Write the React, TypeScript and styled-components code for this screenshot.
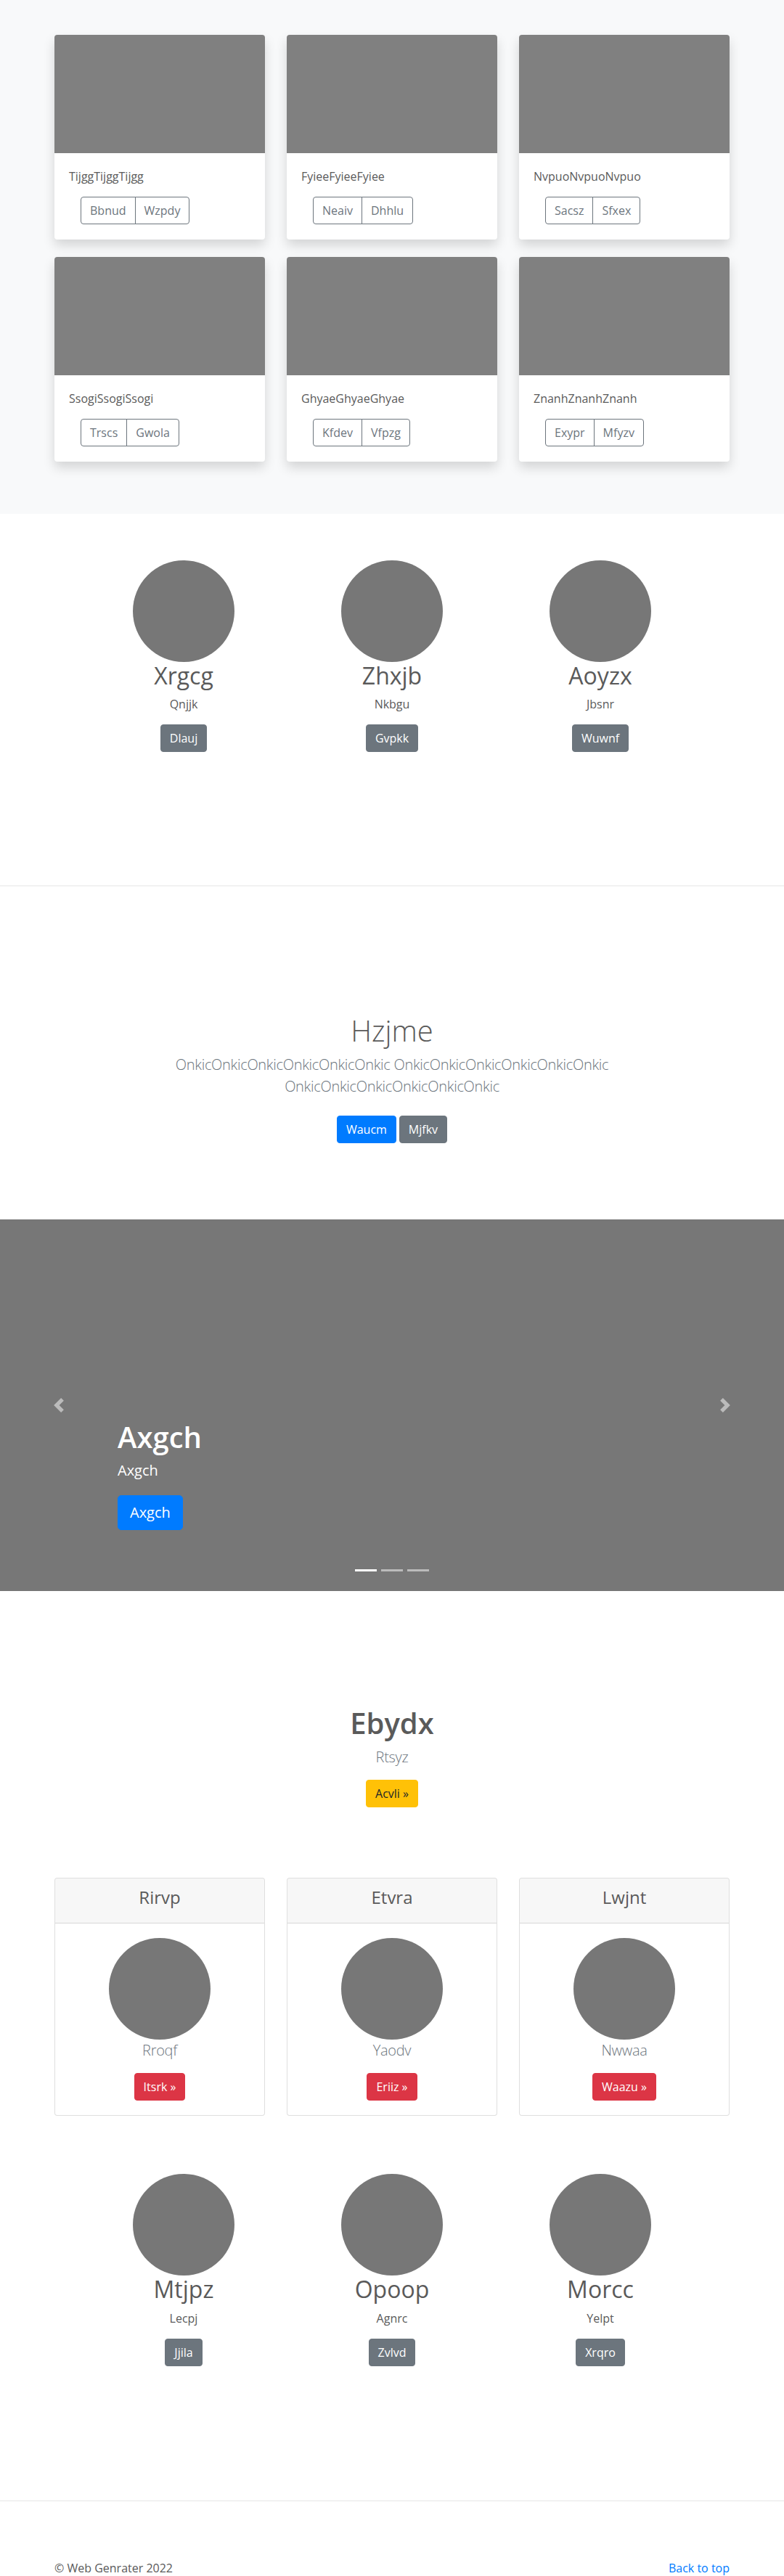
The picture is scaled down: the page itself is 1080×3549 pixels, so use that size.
import React from 'react';
import styled, { createGlobalStyle, css } from 'styled-components';

const GlobalStyle = createGlobalStyle`
  html, body { margin: 0; padding: 0; }
  *, *::before, *::after { box-sizing: border-box; }
  body {
    font-family: "Open Sans", "Noto Sans", "Liberation Sans", sans-serif;
    font-size: 16px;
    line-height: 1.5;
    color: #5a5a5a;
    background: #fff;
  }
`;

type Variant = 'primary' | 'secondary' | 'warning' | 'danger' | 'outline';

const variantStyles: Record<Variant, ReturnType<typeof css>> = {
  primary: css`background: #007bff; border-color: #007bff; color: #fff;`,
  secondary: css`background: #6c757d; border-color: #6c757d; color: #fff;`,
  warning: css`background: #ffc107; border-color: #ffc107; color: #212529;`,
  danger: css`background: #dc3545; border-color: #dc3545; color: #fff;`,
  outline: css`background: transparent; border-color: #6c757d; color: #6c757d;`,
};

const Button = styled.a<{ $variant: Variant; $lg?: boolean }>`
  display: inline-flex;
  align-items: center;
  justify-content: center;
  height: 38px;
  padding: 0 12px;
  font-size: 16px;
  line-height: 1.5;
  font-weight: 400;
  border: 1px solid transparent;
  border-radius: 4px;
  text-decoration: none;
  white-space: nowrap;
  cursor: pointer;
  ${(p) => variantStyles[p.$variant]}
  ${(p) =>
    p.$lg &&
    css`
      height: 48px;
      padding: 0 16px;
      font-size: 20px;
      border-radius: 5px;
    `}
`;

const Container = styled.div<{ $width?: number }>`
  width: ${(p) => p.$width ?? 930}px;
  margin: 0 auto;
`;

/* ---------- Album ---------- */
const AlbumSection = styled.section`
  background: #f8f9fa;
  padding: 48px 0 72px;
`;

const CardGrid = styled.div`
  display: grid;
  grid-template-columns: repeat(3, 1fr);
  column-gap: 30px;
  row-gap: 24px;
`;

const AlbumCard = styled.div`
  background: #fff;
  border-radius: 4px;
  overflow: hidden;
  box-shadow: 0 8px 16px rgba(0, 0, 0, 0.15);
`;

const Thumb = styled.div`
  height: 163px;
  background: #808080;
`;

const AlbumBody = styled.div`
  padding: 20px 20px 21px;
`;

const CardText = styled.p`
  margin: 0 0 16px;
`;

const ButtonGroup = styled.div`
  display: inline-flex;
  margin-left: 16px;
  & > ${Button} {
    border-radius: 0;
  }
  & > ${Button}:first-child {
    border-radius: 4px 0 0 4px;
  }
  & > ${Button}:last-child {
    border-radius: 0 4px 4px 0;
    margin-left: -1px;
  }
`;

/* ---------- Marketing ---------- */
const MarketingSection = styled.section<{ $top: number; $bottom: number }>`
  padding: ${(p) => p.$top}px 0 ${(p) => p.$bottom}px;
`;

const TeamGrid = styled.div`
  width: 861px;
  margin: 0 auto;
  display: grid;
  grid-template-columns: repeat(3, 1fr);
  text-align: center;
`;

const Member = styled.div`
  display: flex;
  flex-direction: column;
  align-items: center;
`;

const Avatar = styled.div`
  width: 140px;
  height: 140px;
  border-radius: 50%;
  background: #777;
  flex-shrink: 0;
`;

const MemberName = styled.h2`
  font-size: 32px;
  line-height: 38.4px;
  font-weight: 400;
  margin: 0 0 8px;
`;

const MemberRole = styled.p`
  margin: 0 0 16px;
`;

const Divider = styled.hr`
  margin: 0;
  border: 0;
  border-top: 1px solid #e6e6e6;
`;

/* ---------- Jumbotron ---------- */
const Jumbotron = styled.section`
  padding: 175px 0 97px;
  text-align: center;
`;

const JumboInner = styled.div`
  max-width: 640px;
  margin: 0 auto;
`;

const JumboTitle = styled.h1<{ $weight?: number }>`
  font-size: 40px;
  line-height: 48px;
  font-weight: ${(p) => p.$weight ?? 300};
  margin: 0 0 8px;
`;

const Lead = styled.p<{ $gap?: number }>`
  font-size: 20px;
  line-height: 30px;
  font-weight: 300;
  letter-spacing: -0.3px;
  color: #6c757d;
  margin: 0 0 ${(p) => p.$gap ?? 16}px;
`;

const ActionRow = styled.div<{ $gap?: number; $top?: number; $bottom?: number }>`
  display: flex;
  justify-content: center;
  gap: ${(p) => p.$gap ?? 4}px;
  margin: ${(p) => p.$top ?? 0}px 0 ${(p) => p.$bottom ?? 0}px;
`;

/* ---------- Carousel ---------- */
const Carousel = styled.section`
  position: relative;
  height: 512px;
  background: #777;
  overflow: hidden;
`;

const Caption = styled.div`
  position: absolute;
  left: 15%;
  right: 15%;
  bottom: 48px;
  padding: 20px 0;
  color: #fff;
  text-align: left;
  z-index: 10;
`;

const CaptionTitle = styled.h1`
  font-size: 40px;
  line-height: 48px;
  font-weight: 600;
  margin: 0 0 8px;
`;

const CaptionText = styled.p`
  font-size: 20px;
  line-height: 28px;
  margin: 0 0 20px;
`;

const CaptionAction = styled.div`
  display: flex;
  margin-bottom: 16px;
`;

const Control = styled.a<{ $side: 'left' | 'right' }>`
  position: absolute;
  top: 0;
  bottom: 0;
  ${(p) => (p.$side === 'left' ? 'left: 0;' : 'right: 0;')}
  width: 15%;
  display: flex;
  align-items: center;
  justify-content: center;
  opacity: 0.5;
  z-index: 5;
`;

const Indicators = styled.ol`
  position: absolute;
  left: 0;
  right: 0;
  bottom: 27px;
  margin: 0;
  padding: 0;
  list-style: none;
  display: flex;
  justify-content: center;
  gap: 6px;
  z-index: 15;
`;

const Indicator = styled.li<{ $active?: boolean }>`
  width: 30px;
  height: 3px;
  background: #fff;
  opacity: ${(p) => (p.$active ? 1 : 0.5)};
`;

/* ---------- Features ---------- */
const Features = styled.section`
  padding-top: 158px;
  text-align: center;
`;

const PricingGrid = styled.div`
  display: grid;
  grid-template-columns: repeat(3, 1fr);
  column-gap: 30px;
  margin-top: 97px;
`;

const PricingCard = styled.div`
  border: 1px solid rgba(0, 0, 0, 0.125);
  border-radius: 4px;
  overflow: hidden;
  background: #fff;
`;

const PricingHeader = styled.div`
  background: rgba(0, 0, 0, 0.03);
  border-bottom: 1px solid rgba(0, 0, 0, 0.125);
  padding: 12px 20px;
`;

const PricingTitle = styled.h4`
  font-size: 24px;
  line-height: 28.8px;
  font-weight: 400;
  margin: 0 0 8px;
`;

const PricingBody = styled.div`
  padding: 20px;
  display: flex;
  flex-direction: column;
  align-items: center;
`;

/* ---------- Footer ---------- */
const Footer = styled.footer`
  padding-top: 80px;
`;

const FooterRow = styled.div`
  display: flex;
  justify-content: space-between;
  line-height: 24px;
`;

const FooterText = styled.p`
  margin: 0;
`;

const FooterLink = styled.a`
  color: #007bff;
  text-decoration: none;
`;

const Chevron = ({ dir }: { dir: 'left' | 'right' }) => (
  <svg width="20" height="20" viewBox="0 0 8 8" fill="#fff">
    {dir === 'left' ? (
      <path d="M5.25 0l-4 4 4 4 1.5-1.5L4.25 4l2.5-2.5L5.25 0z" />
    ) : (
      <path d="M2.75 0l-1.5 1.5L3.75 4l-2.5 2.5L2.75 8l4-4-4-4z" />
    )}
  </svg>
);

const albumCards = [
  { text: 'TijggTijggTijgg', a: 'Bbnud', b: 'Wzpdy' },
  { text: 'FyieeFyieeFyiee', a: 'Neaiv', b: 'Dhhlu' },
  { text: 'NvpuoNvpuoNvpuo', a: 'Sacsz', b: 'Sfxex' },
  { text: 'SsogiSsogiSsogi', a: 'Trscs', b: 'Gwola' },
  { text: 'GhyaeGhyaeGhyae', a: 'Kfdev', b: 'Vfpzg' },
  { text: 'ZnanhZnanhZnanh', a: 'Exypr', b: 'Mfyzv' },
];

const team1 = [
  { name: 'Xrgcg', role: 'Qnjjk', btn: 'Dlauj' },
  { name: 'Zhxjb', role: 'Nkbgu', btn: 'Gvpkk' },
  { name: 'Aoyzx', role: 'Jbsnr', btn: 'Wuwnf' },
];

const team2 = [
  { name: 'Mtjpz', role: 'Lecpj', btn: 'Jjila' },
  { name: 'Opoop', role: 'Agnrc', btn: 'Zvlvd' },
  { name: 'Morcc', role: 'Yelpt', btn: 'Xrqro' },
];

const pricing = [
  { title: 'Rirvp', text: 'Rroqf', btn: 'Itsrk »' },
  { title: 'Etvra', text: 'Yaodv', btn: 'Eriiz »' },
  { title: 'Lwjnt', text: 'Nwwaa', btn: 'Waazu »' },
];

const Team = ({ items }: { items: typeof team1 }) => (
  <TeamGrid>
    {items.map((m) => (
      <Member key={m.name}>
        <Avatar />
        <MemberName>{m.name}</MemberName>
        <MemberRole>{m.role}</MemberRole>
        <Button $variant="secondary">{m.btn}</Button>
      </Member>
    ))}
  </TeamGrid>
);

export default function App() {
  const onk = 'OnkicOnkicOnkicOnkicOnkicOnkic';
  return (
    <>
      <GlobalStyle />
      <AlbumSection>
        <Container>
          <CardGrid>
            {albumCards.map((c) => (
              <AlbumCard key={c.text}>
                <Thumb />
                <AlbumBody>
                  <CardText>{c.text}</CardText>
                  <ButtonGroup>
                    <Button $variant="outline">{c.a}</Button>
                    <Button $variant="outline">{c.b}</Button>
                  </ButtonGroup>
                </AlbumBody>
              </AlbumCard>
            ))}
          </CardGrid>
        </Container>
      </AlbumSection>

      <MarketingSection $top={64} $bottom={184}>
        <Team items={team1} />
      </MarketingSection>
      <Divider />

      <Jumbotron>
        <JumboInner>
          <JumboTitle>Hzjme</JumboTitle>
          <Lead>
            {onk} {onk} {onk}
          </Lead>
          <ActionRow $gap={4} $top={25} $bottom={8}>
            <Button $variant="primary">Waucm</Button>
            <Button $variant="secondary">Mjfkv</Button>
          </ActionRow>
        </JumboInner>
      </Jumbotron>

      <Carousel>
        <Control $side="left">
          <Chevron dir="left" />
        </Control>
        <Caption>
          <CaptionTitle>Axgch</CaptionTitle>
          <CaptionText>Axgch</CaptionText>
          <CaptionAction>
            <Button $variant="primary" $lg>
              Axgch
            </Button>
          </CaptionAction>
        </Caption>
        <Control $side="right">
          <Chevron dir="right" />
        </Control>
        <Indicators>
          <Indicator $active />
          <Indicator />
          <Indicator />
        </Indicators>
      </Carousel>

      <Features>
        <Container>
          <JumboTitle $weight={600}>Ebydx</JumboTitle>
          <Lead>Rtsyz</Lead>
          <ActionRow>
            <Button $variant="warning">Acvli »</Button>
          </ActionRow>
          <PricingGrid>
            {pricing.map((p) => (
              <PricingCard key={p.title}>
                <PricingHeader>
                  <PricingTitle>{p.title}</PricingTitle>
                </PricingHeader>
                <PricingBody>
                  <Avatar />
                  <Lead>{p.text}</Lead>
                  <Button $variant="danger">{p.btn}</Button>
                </PricingBody>
              </PricingCard>
            ))}
          </PricingGrid>
        </Container>
      </Features>

      <MarketingSection $top={80} $bottom={185}>
        <Team items={team2} />
      </MarketingSection>
      <Divider />

      <Footer>
        <Container>
          <FooterRow>
            <FooterText>© Web Genrater 2022</FooterText>
            <FooterLink href="#">Back to top</FooterLink>
          </FooterRow>
        </Container>
      </Footer>
    </>
  );
}
